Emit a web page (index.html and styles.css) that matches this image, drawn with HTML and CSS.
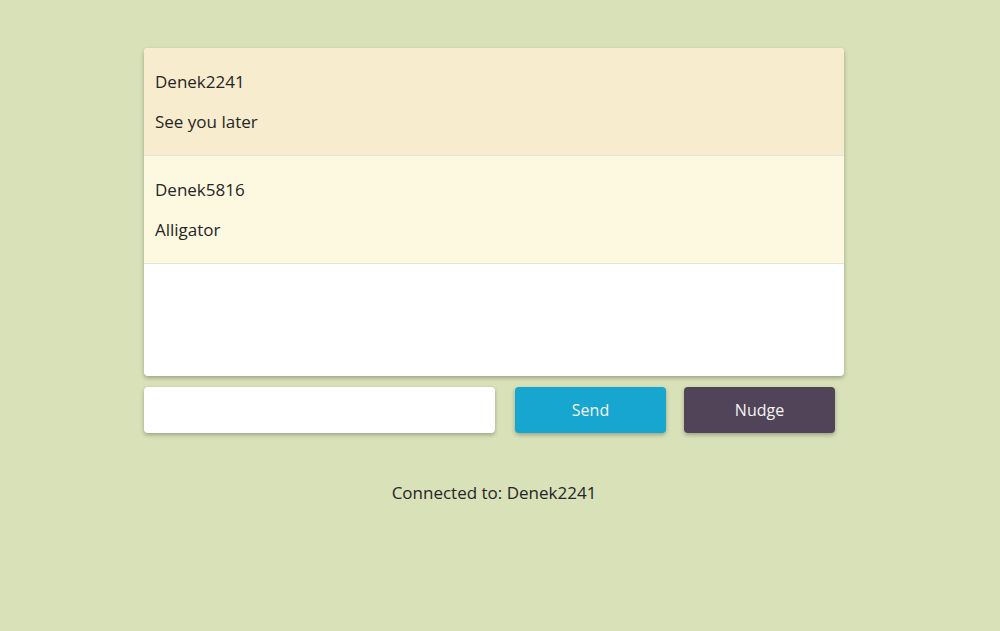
FILE: index.html
```html
<!DOCTYPE html>
<html>
<head>
<meta charset="utf-8">
<link rel="stylesheet" href="styles.css">
</head>
<body>
<div class="page">
  <div class="chat">
    <div class="msg msg-a">
      <p class="name">Denek2241</p>
      <p class="text">See you later</p>
    </div>
    <div class="msg msg-b">
      <p class="name">Denek5816</p>
      <p class="text">Alligator</p>
    </div>
  </div>
  <div class="controls">
    <input class="input" type="text">
    <button class="btn btn-send">Send</button>
    <button class="btn btn-nudge">Nudge</button>
  </div>
  <p class="status">Connected to: Denek2241</p>
</div>
</body>
</html>
```
FILE: styles.css
```css
html, body {
  margin: 0;
  padding: 0;
  background: #d9e1b8;
  font-family: "Open Sans", "Noto Sans", sans-serif;
  color: #262626;
}
.page {
  padding: 48px 0 0 144px;
  width: 700px;
}
.chat {
  width: 700px;
  height: 328px;
  background: #ffffff;
  border-radius: 4px;
  box-shadow: 0 2px 4px rgba(0, 0, 0, 0.28);
  overflow: hidden;
}
.msg {
  padding: 23px 11px 22px;
  border-bottom: 1px solid #e6e4da;
}
.msg-a { background: #f8ecce; }
.msg-b { background: #fdf8e0; }
.msg p {
  margin: 0;
  font-size: 17px;
  line-height: 22px;
}
.msg .text { margin-top: 18px; }
.controls {
  display: flex;
  margin-top: 11px;
  height: 46px;
}
.input {
  width: 351px;
  height: 46px;
  box-sizing: border-box;
  border: none;
  border-radius: 4px;
  background: #fff;
  box-shadow: 0 2px 4px rgba(0, 0, 0, 0.28);
  outline: none;
}
.btn {
  width: 151px;
  height: 46px;
  border: none;
  border-radius: 4px;
  color: #f4f4f4;
  font-family: "Open Sans", "Noto Sans", sans-serif;
  font-size: 16px;
  box-shadow: 0 2px 4px rgba(0, 0, 0, 0.28);
}
.btn-send {
  margin-left: 20px;
  background: #17a6cf;
}
.btn-nudge {
  margin-left: 18px;
  background: #514458;
}
.status {
  margin: 49px 0 0;
  text-align: center;
  font-size: 17px;
  line-height: 22px;
}
```
